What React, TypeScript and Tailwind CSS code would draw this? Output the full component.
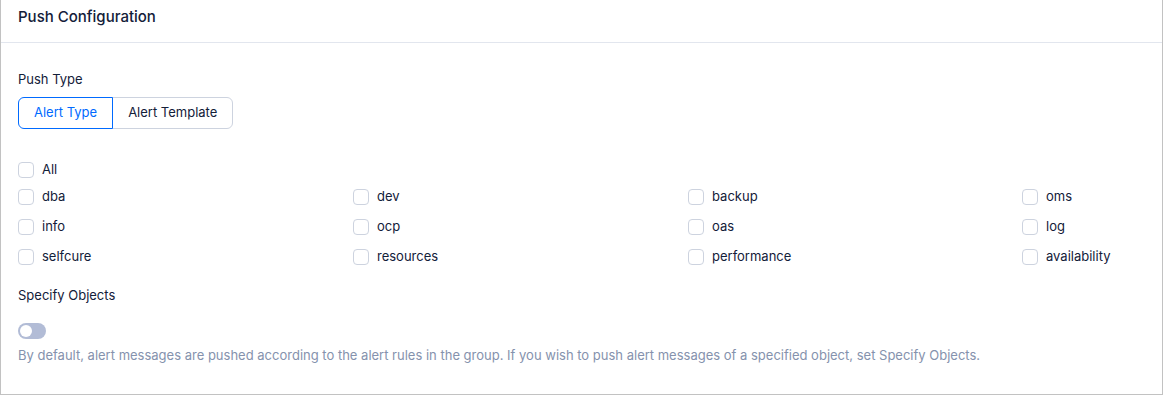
import React, { useState } from 'react';

const TYPES = [
  ['dba', 'dev', 'backup', 'oms'],
  ['info', 'ocp', 'oas', 'log'],
  ['selfcure', 'resources', 'performance', 'availability'],
];

function Checkbox({ label }: { label: string }) {
  return (
    <label className="flex items-center h-[24px] gap-[8px] text-[13px] text-[#132039] cursor-pointer">
      <span className="w-[16px] h-[16px] rounded-[4px] border border-[#cdd3df] bg-white" />
      <span>{label}</span>
    </label>
  );
}

export default function App() {
  const [mode, setMode] = useState<'type' | 'template'>('type');

  return (
    <div className="w-[1164px] h-[396px] bg-white" style={{ fontFamily: 'Inter, "Liberation Sans", sans-serif' }}>
      <div className="w-[1163px] h-[395px] border-l border-r border-b border-[#c2c2c2]">
        <div className="h-[43px] border-b border-[#e2e6ee] pl-[17px] pt-[4px]">
          <span className="text-[15px] leading-[22px] font-medium text-[#132039]">Push Configuration</span>
        </div>

        <div className="px-[17px]">
          <div className="mt-[26px] text-[13px] leading-[20px] text-[#132039]">Push Type</div>

          <div className="mt-[8px] flex">
            <button
              onClick={() => setMode('type')}
              className={`h-[32px] px-[15px] text-[13px] rounded-l-[6px] border ${
                mode === 'type' ? 'border-[#006aff] text-[#006aff] z-10' : 'border-[#cdd3df] text-[#132039]'
              }`}
            >
              Alert Type
            </button>
            <button
              onClick={() => setMode('template')}
              className={`h-[32px] px-[15px] -ml-px text-[13px] rounded-r-[6px] border ${
                mode === 'template' ? 'border-[#006aff] text-[#006aff] z-10' : 'border-[#cdd3df] text-[#132039]'
              }`}
            >
              Alert Template
            </button>
          </div>

          <div className="mt-[29px]">
            <Checkbox label="All" />
          </div>

          <div className="mt-[3px] grid grid-cols-[335px_335px_334px_auto] gap-y-[6px]">
            {TYPES.flat().map((t) => (
              <Checkbox key={t} label={t} />
            ))}
          </div>

          <div className="mt-[16px] text-[13px] leading-[20px] text-[#132039]">Specify Objects</div>

          <div className="mt-[18px] w-[28px] h-[16px] rounded-full bg-[#b2bcd6] flex items-center px-[2px]">
            <span className="w-[12px] h-[12px] rounded-full bg-white" />
          </div>

          <div className="mt-[6px] text-[13px] leading-[20px] text-[#8592ad]">
            By default, alert messages are pushed according to the alert rules in the group. If you wish to push alert messages of a specified object, set Specify Objects.
          </div>
        </div>
      </div>
    </div>
  );
}
